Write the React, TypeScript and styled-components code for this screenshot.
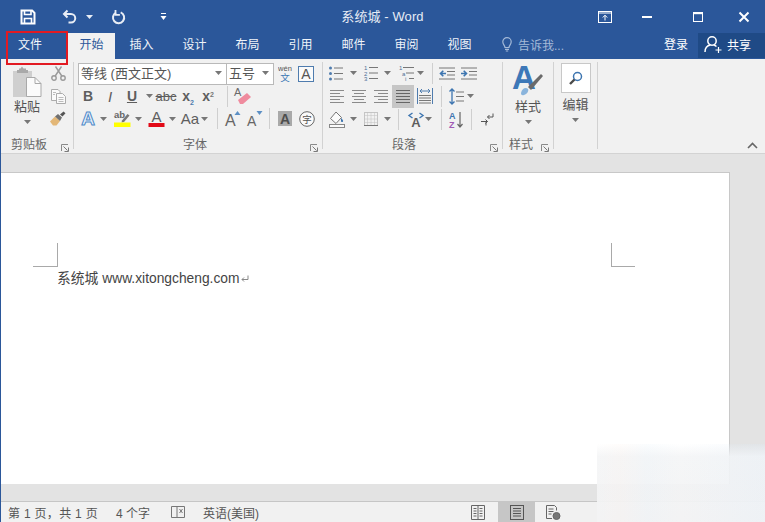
import React from "react";
import styled, { createGlobalStyle } from "styled-components";

const SANS = `"Liberation Sans", "Noto Sans CJK SC", sans-serif`;
const BLUE = "#2b579a";
const INK = "#4a4a4a";

const Global = createGlobalStyle`
  html, body { margin: 0; padding: 0; overflow: hidden; background: #fff; }
  * { box-sizing: border-box; }
`;

const Window = styled.div`
  position: relative;
  width: 765px;
  height: 522px;
  display: flex;
  flex-direction: column;
  overflow: hidden;
  border-left: 1px solid ${BLUE};
  font-family: ${SANS};
  font-size: 12px;
  color: ${INK};
`;

const TitleBar = styled.header`
  height: 33px;
  flex: none;
  margin-left: -1px;
  background: ${BLUE};
  display: grid;
  grid-template-columns: 1fr auto 1fr;
  align-items: center;
  color: #fff;
`;
const TitleText = styled.div`
  font-size: 13px;
  color: #e6ecf5;
  letter-spacing: 0.1px;
  padding-bottom: 2px;
`;
const WinRow = styled.div`
  display: flex;
  align-items: center;
  justify-content: flex-end;
  padding-right: 14px;
  height: 30px;
`;
const Slot = styled.div<{ $w: number; $ml?: number; $h?: number; $end?: boolean }>`
  flex: none;
  width: ${(p) => p.$w}px;
  margin-left: ${(p) => p.$ml ?? 0}px;
  display: flex;
  align-items: ${(p) => (p.$end ? "flex-end" : "center")};
  justify-content: center;
  height: ${(p) => (p.$h ? `${p.$h}px` : "100%")};
`;

const TabBar = styled.nav`
  height: 26px;
  flex: none;
  margin-left: -1px;
  background: ${BLUE};
  display: flex;
  align-items: stretch;
  color: #fff;
`;
const FileTab = styled.div`
  width: 60px;
  display: flex;
  align-items: center;
  justify-content: center;
  padding-bottom: 5px;
  color: #f4f7fb;
`;
const Tab = styled.div<{ $active?: boolean }>`
  width: ${(p) => (p.$active ? 47 : 53)}px;
  margin-left: ${(p) => (p.$active ? 8 : 0)}px;
  display: flex;
  align-items: center;
  justify-content: center;
  padding-bottom: 5px;
  color: ${(p) => (p.$active ? BLUE : "#f0f4f9")};
  background: ${(p) => (p.$active ? "#f1f1f1" : "transparent")};
`;
const TellMe = styled.div`
  margin-left: 16px;
  display: flex;
  align-items: center;
  gap: 6px;
  padding-bottom: 4px;
  color: #a5bad8;
`;
const SignIn = styled.div`
  margin-left: auto;
  width: 32px;
  margin-right: 6px;
  display: flex;
  align-items: center;
  justify-content: center;
  padding-bottom: 5px;
`;
const Share = styled.div`
  width: 67px;
  height: 25px;
  background: #1f4a86;
  display: flex;
  align-items: center;
  padding: 0 0 3px 6px;
  gap: 5px;
`;

const Ribbon = styled.section`
  height: 94px;
  flex: none;
  background: #f1f1f1;
  display: flex;
  position: relative;
`;
const Group = styled.div<{ $w: number }>`
  width: ${(p) => p.$w}px;
  flex: none;
  display: flex;
  flex-direction: column;
`;
const GroupBody = styled.div`
  height: 76px;
  padding-top: 3px;
  display: flex;
  flex: none;
`;
const Stack = styled.div`
  display: flex;
  flex-direction: column;
`;
const ToolRow = styled.div<{ $h: number }>`
  height: ${(p) => p.$h}px;
  display: flex;
  align-items: center;
  flex: none;
`;
const Divider = styled.div`
  width: 1px;
  flex: none;
  margin: 3px 0 4px;
  background: #d2d2d2;
`;
const RowSep = styled.div`
  width: 1px;
  height: 21px;
  background: #cfcfcf;
`;
const GroupLabel = styled.div<{ $pl: number }>`
  flex: 1;
  display: flex;
  align-items: center;
  padding: 0 4px 6px ${(p) => p.$pl}px;
  color: #666;
`;
const Launcher = styled.svg`
  margin-left: auto;
  width: 8px;
  height: 8px;
  margin-top: 8px;
`;
const Combo = styled.div<{ $w: number; $first?: boolean }>`
  width: ${(p) => p.$w}px;
  height: 22px;
  margin-left: ${(p) => (p.$first ? 4 : -1)}px;
  background: #fff;
  border: 1px solid #b9b9b9;
  display: flex;
  align-items: center;
  justify-content: space-between;
  padding: 0 4px 2px 2px;
  font-size: 13px;
  color: #555;
`;
const BigTool = styled.div<{ $w: number; $pl?: number }>`
  width: ${(p) => p.$w}px;
  padding-left: ${(p) => p.$pl ?? 0}px;
  display: flex;
  flex-direction: column;
  align-items: center;
  flex: none;
`;
const BigLabel = styled.div<{ $mt?: number }>`
  font-size: 13px;
  line-height: 16px;
  margin-top: ${(p) => p.$mt ?? 0}px;
  color: #555;
`;
const EditBox = styled.div`
  width: 30px;
  height: 30px;
  background: #fff;
  border: 1px solid #c8c8c8;
  display: flex;
  align-items: center;
  justify-content: center;
  margin-top: 1px;
`;
const ActiveCell = styled.div`
  width: 22px;
  height: 23px;
  background: #c6c6c6;
  display: flex;
  align-items: center;
  justify-content: center;
`;
const Collapse = styled.svg`
  position: absolute;
  right: 7px;
  bottom: 4px;
  width: 11px;
  height: 7px;
`;

const Workspace = styled.main`
  flex: 1;
  background: #e3e3e3;
  border-top: 1px solid #d3d3d3;
  padding: 18px 35px 17px 0;
  display: flex;
  min-height: 0;
`;
const Page = styled.article`
  flex: 1;
  background: #fff;
  border-top: 1px solid #c8c8c8;
  border-right: 1px solid #c8c8c8;
  padding-top: 70px;
`;
const MarkRow = styled.div`
  display: flex;
  justify-content: space-between;
  padding: 0 94px 0 32px;
`;
const MarkLeft = styled.div`
  width: 25px;
  height: 24px;
  border-right: 1px solid #a9a9a9;
  border-bottom: 1px solid #a9a9a9;
`;
const MarkRight = styled.div`
  width: 24px;
  height: 24px;
  border-left: 1px solid #a9a9a9;
  border-bottom: 1px solid #a9a9a9;
`;
const DocLine = styled.p`
  margin: 3px 0 0 56px;
  font-size: 13.8px;
  line-height: 18px;
  color: #444;
  display: flex;
  align-items: center;
  gap: 1px;
  white-space: pre;
`;
const StatusBar = styled.footer`
  height: 21px;
  flex: none;
  background: #f1f1f1;
  border-top: 1px solid #c6c6c6;
  display: flex;
  align-items: stretch;
  color: #555;
  padding-left: 7px;
`;
const StatusText = styled.div<{ $ml?: number; $ls?: number }>`
  margin-left: ${(p) => p.$ml ?? 0}px;
  letter-spacing: ${(p) => p.$ls ?? 0}px;
  display: flex;
  align-items: center;
  white-space: pre;
`;
const StatusIcon = styled.div<{ $ml: number; $w?: number; $on?: boolean }>`
  margin-left: ${(p) => p.$ml}px;
  width: ${(p) => p.$w ?? 16}px;
  flex: none;
  display: flex;
  align-items: center;
  justify-content: center;
  background: ${(p) => (p.$on ? "#c6c6c6" : "transparent")};
`;
const RedFrame = styled.div`
  position: absolute;
  left: 5px;
  top: 31px;
  width: 62px;
  height: 34px;
  border: 2px solid #e21a22;
`;
const Haze = styled.div`
  position: absolute;
  left: 596px;
  top: 444px;
  right: 0;
  bottom: 0;
  background:
    linear-gradient(90deg, transparent 0, rgba(255, 235, 225, 0.12) 14%, rgba(225, 240, 250, 0.16) 30%, transparent 50%, rgba(220, 235, 250, 0.2) 95%),
    linear-gradient(180deg, rgba(244, 245, 246, 0) 0, rgba(244, 245, 246, 0.9) 16%, rgba(243, 243, 244, 0.95) 100%);
`;

/* ---------- icons ---------- */
const Ic = styled.svg`
  display: block;
  flex: none;
  overflow: visible;
`;
const txt = { fontFamily: "Liberation Sans, sans-serif" } as const;

const Caret = ({ light }: { light?: boolean }) => (
  <Ic width="7" height="4" viewBox="0 0 7 4"><path d="M0 0h7L3.500 4z" fill={light ? "#e8edf5" : "#777"} /></Ic>
);
const Lnch = () => (
  <Launcher viewBox="0 0 8 8">
    <path d="M.5 7V.5H7" fill="none" stroke="#8a8a8a" />
    <path d="M2.500 2.500 6.500 6.500M7.500 3.500v4h-4" fill="none" stroke="#7a7a7a" />
  </Launcher>
);
const Save = () => (
  <Ic width="16" height="16" viewBox="0 0 16 16" fill="none" stroke="#fff" strokeWidth="2">
    <path d="M1.500 1.500h10.600l2.400 2.400v10.600h-13z" />
    <path d="M4.500 1.500v4h6.500v-4" strokeWidth="1.600" />
    <path d="M4.500 14v-4.500h7V14" strokeWidth="1.600" />
  </Ic>
);
const Undo = () => (
  <Ic width="16" height="16" viewBox="0 0 16 16" fill="none" stroke="#e8edf5" strokeWidth="2">
    <path d="M5.500 1.500 2 5l3.500 3.500" />
    <path d="M2.500 5h6.500a4 4 0 0 1 0 8.500H6.500" />
  </Ic>
);
const Redo = () => (
  <Ic width="16" height="16" viewBox="0 0 16 16" fill="none" stroke="#e8edf5" strokeWidth="2">
    <path d="M6 3.600A5.600 5.600 0 1 0 10.700 3.400" />
    <path d="M5.500 1v4.800h4.400" strokeWidth="1.800" />
  </Ic>
);
const QatMore = () => (
  <Ic width="7" height="9" viewBox="0 0 7 9"><path d="M1 1.500h5" stroke="#fff" /><path d="M.5 4h6L3.500 8z" fill="#fff" /></Ic>
);
const RibbonMode = () => (
  <Ic width="14" height="12" viewBox="0 0 14 12" fill="none" stroke="#fff">
    <rect x=".5" y=".5" width="13" height="11" />
    <path d="M.5 2h13" />
    <path d="M7 9.500V4.500M4.800 6.500 7 4.200l2.200 2.300" />
  </Ic>
);
const Minimize = () => (
  <Ic width="10" height="2" viewBox="0 0 10 2"><rect width="10" height="2" fill="#fff" /></Ic>
);
const Maximize = () => (
  <Ic width="10" height="10" viewBox="0 0 10 10" fill="none" stroke="#fff"><rect x=".5" y=".5" width="9" height="9" /><path d="M0 1.500h10" strokeWidth="1.400" /></Ic>
);
const CloseX = () => (
  <Ic width="10" height="10" viewBox="0 0 10 10" stroke="#fff" strokeWidth="2"><path d="M.5.500l9 9M9.500.500l-9 9" /></Ic>
);
const Bulb = () => (
  <Ic width="10" height="15" viewBox="0 0 10 15" fill="none" stroke="#a5bad8" strokeWidth="1.200">
    <path d="M3 10.500C3 8.500.8 7.500.8 4.800a4.200 4.200 0 0 1 8.400 0C9.200 7.500 7 8.500 7 10.500z" />
    <path d="M3 12.300h4M3.800 14h2.400" />
  </Ic>
);
const Person = () => (
  <Ic width="18" height="18" viewBox="0 0 18 18" fill="none" stroke="#fff" strokeWidth="1.500">
    <circle cx="8" cy="6" r="4.200" />
    <path d="M1 17c0-4 2.500-6.500 5.500-7M9.500 10c1.200.2 2.200.8 3 1.500" />
    <path d="M11.500 15h6M14.500 12v6" strokeWidth="1.200" />
  </Ic>
);
const Paste = () => (
  <Ic width="30" height="31" viewBox="0 0 30 31">
    <path d="M1 5h19v26H1z" fill="#cfcfcf" />
    <path d="M7 4V2.500h1.500L10 .5l1.500 2H14V4h2v3H5V4z" fill="#a9a9a9" />
    <path d="M14.500 11.500h8.500l6 6v13h-14.500z" fill="#fbfbfb" stroke="#a9a9a9" />
    <path d="M23 11.500v6h6" fill="none" stroke="#a9a9a9" />
  </Ic>
);
const Scissors = () => (
  <Ic width="15" height="15" viewBox="0 0 15 15" fill="none" stroke="#9a9a9a" strokeWidth="1.400">
    <circle cx="3" cy="12" r="2.200" />
    <circle cx="12" cy="12" r="2.200" />
    <path d="M4.200 10 10.500.5M10.800 10 4.500.5" />
  </Ic>
);
const CopyDocs = () => (
  <Ic width="15" height="15" viewBox="0 0 15 15" fill="#fafafa" stroke="#acacac">
    <path d="M.5.500h6.500l2 2v9H.5z" />
    <path d="M5.500 4.500h6l3 3v7h-9z" />
    <path d="M7.500 8.500h5M7.500 10.500h5M7.500 12.500h5M2 3.500h3M2 5.500h2" strokeWidth=".8" />
  </Ic>
);
const FormatBrush = () => (
  <Ic width="16" height="15" viewBox="0 0 16 15">
    <path d="M0 10.500 5 5.500l5 4.500-3.500 4.500H3z" fill="#e3b777" />
    <path d="M5 5.500l3-2.500 4 3.500-2 3.500z" fill="#6f6f6f" />
    <path d="M10 3.500l3.500-3 2 1.800-3 3.200z" fill="#555" />
  </Ic>
);
const WenGlyph = styled.span`
  font-size: 7.5px;
  line-height: 9px;
  height: 8px;
  overflow: hidden;
  color: #555;
`;
const WenChar = styled.span`
  font-size: 9.5px;
  line-height: 10px;
  height: 10px;
  overflow: hidden;
  color: #3b78b5;
`;
const WenStack = styled.div`
  display: flex;
  flex-direction: column;
  align-items: center;
  gap: 1px;
`;
const BoxA = () => (
  <Ic width="16" height="16" viewBox="0 0 16 16">
    <rect x=".5" y=".5" width="15" height="15" fill="#fafafa" stroke="#4f7cae" />
    <text x="8" y="13" textAnchor="middle" fontSize="14" fill="#555" style={txt}>A</text>
  </Ic>
);
const Glyph = styled.span<{ $size?: number; $bold?: boolean; $italic?: boolean; $under?: boolean; $strike?: boolean }>`
  font-size: ${(p) => p.$size ?? 14}px;
  font-weight: ${(p) => (p.$bold ? 700 : 400)};
  font-style: ${(p) => (p.$italic ? "italic" : "normal")};
  text-decoration: ${(p) => (p.$under ? "underline" : p.$strike ? "line-through" : "none")};
  color: #5e5e5e;
  line-height: 1;
  white-space: nowrap;
`;
const Sup = styled.span<{ $low?: boolean }>`
  font-size: 7px;
  font-weight: 700;
  color: ${(p) => (p.$low ? "#4f7cae" : "#777")};
  position: relative;
  top: ${(p) => (p.$low ? 4 : -4)}px;
`;
const EffectA = styled.span`
  font-size: 19px;
  font-weight: 700;
  line-height: 1;
  color: #eaf2fb;
  -webkit-text-stroke: 1px #4f8ac9;
`;
const Highlight = () => (
  <Ic width="17" height="17" viewBox="0 0 17 17">
    <text x="0" y="8" fontSize="9.500" fontWeight="700" fill="#666" style={txt}>ab</text>
    <path d="M8 10.500 13.500 4l2 1.500-5.500 6.500-2.500.5z" fill="#777" />
    <rect x="0" y="12.500" width="16.500" height="4.500" fill="#ffff00" />
  </Ic>
);
const FontColor = () => (
  <Ic width="17" height="17" viewBox="0 0 17 17">
    <text x="8.500" y="12" textAnchor="middle" fontSize="15" fill="#5e5e5e" style={txt}>A</text>
    <rect x=".5" y="13" width="16" height="4" fill="#e20a17" />
  </Ic>
);
const Eraser = () => (
  <Ic width="18" height="18" viewBox="0 0 18 18">
    <text x="0" y="9" fontSize="11" fill="#6a6a6a" style={txt}>A</text>
    <path d="M4 13 13 6l4 4-8 7H6z" fill="#ef8b9e" />
  </Ic>
);
const SizeA = ({ up }: { up: boolean }) => (
  <Ic width="17" height="17" viewBox="0 0 17 17">
    <text x="0" y="16" fontSize={up ? 16 : 14} fill="#666" style={txt}>A</text>
    <path d={up ? "M9.500 5 12.500 1l3 4z" : "M9.500 1h6l-3 4z"} fill="#5c8fc4" />
  </Ic>
);
const ShadeA = () => (
  <Ic width="14" height="15" viewBox="0 0 14 15">
    <rect width="14" height="15" fill="#a9a9a9" />
    <text x="7" y="13" textAnchor="middle" fontSize="14" fontWeight="700" fill="#4e4e4e" style={txt}>A</text>
  </Ic>
);
const Phonetic = () => (
  <Ic width="16" height="16" viewBox="0 0 16 16">
    <circle cx="8" cy="8" r="7.300" fill="#fafafa" stroke="#666" />
    <text x="8" y="11.500" textAnchor="middle" fontSize="9.500" fill="#555" fontFamily="Noto Sans CJK SC">字</text>
  </Ic>
);
const LINE = "#777";
const Bullets = () => (
  <Ic width="14" height="15" viewBox="0 0 14 15">
    <path d="M5 2h9M5 7.500h9M5 13h9" stroke={LINE} />
    <circle cx="1.500" cy="2" r="1.500" fill="#4f7cae" /><circle cx="1.500" cy="7.500" r="1.500" fill="#4f7cae" /><circle cx="1.500" cy="13" r="1.500" fill="#4f7cae" />
  </Ic>
);
const Numbers = () => (
  <Ic width="14" height="16" viewBox="0 0 14 16">
    <path d="M5 2.500h9M5 8h9M5 13.500h9" stroke={LINE} />
    <g fontSize="6" fill="#4f6f96" style={txt}>
      <text x="0" y="5">1</text><text x="0" y="10.500">2</text><text x="0" y="16">3</text>
    </g>
  </Ic>
);
const Multi = () => (
  <Ic width="15" height="16" viewBox="0 0 15 16">
    <path d="M4 2.500h11M7 8h8M10 13.500h5" stroke={LINE} />
    <g fontSize="6" fill="#4f6f96" style={txt}>
      <text x="0" y="5">1</text><text x="3" y="10.500">a</text><text x="6" y="16">i</text>
    </g>
  </Ic>
);
const Indent = ({ dir }: { dir: "l" | "r" }) => (
  <Ic width="16" height="13" viewBox="0 0 16 13">
    <path d="M0 1h16M8 4.500h8M8 8h8M0 12h16" stroke={LINE} />
    <path d={dir === "l" ? "M7 6.500H1.500M4.300 3.700 1.500 6.500l2.800 2.800" : "M0 6.500h5.500M2.700 3.700l2.800 2.800-2.800 2.800"} fill="none" stroke="#3d75b0" strokeWidth="1.600" />
  </Ic>
);
const Align = ({ kind }: { kind: "l" | "c" | "r" | "j" }) => {
  const rows = [1, 4, 7, 10, 13];
  const w = [14, 10, 14, 10, 14];
  const x = (i: number) => (kind === "j" || kind === "l" ? 0 : kind === "r" ? 14 - w[i] : (14 - w[i]) / 2);
  return (
    <Ic width="14" height="14" viewBox="0 0 14 14">
      {rows.map((y, i) => (
        <path key={y} d={`M${x(i)} ${y + 0.5}h${kind === "j" ? 14 : w[i]}`} stroke={kind === "j" ? "#666" : "#8a8a8a"} />
      ))}
    </Ic>
  );
};
const Distribute = () => (
  <Ic width="16" height="16" viewBox="0 0 16 16">
    <path d="M.5 0v16M15.500 0v16" stroke="#4f7cae" />
    <path d="M3 3h10M5 1 3 3l2 2M11 1l2 2-2 2" fill="none" stroke="#4f7cae" />
    <path d="M2 7.500h12M2 10h12M2 12.500h12M2 15h12" stroke={LINE} />
  </Ic>
);
const Spacing = () => (
  <Ic width="15" height="17" viewBox="0 0 15 17">
    <path d="M3 1v15M.5 3.500 3 1l2.500 2.500M.5 13.500 3 16l2.500-2.500" fill="none" stroke="#3d75b0" strokeWidth="1.300" />
    <path d="M7 4h8M7 8.500h8M7 13h8" stroke={LINE} />
  </Ic>
);
const Shading = () => (
  <Ic width="17" height="17" viewBox="0 0 17 17">
    <path d="M7 1 1.500 7.500 7 12.500l5.500-6z" fill="#fbfbfb" stroke="#777" />
    <path d="M12 7c1.500 1.500 2.500 2.500 2 3.500s-2.500.5-2-1z" fill="#3d75b0" />
    <rect x=".5" y="13.500" width="15" height="3" fill="#fafafa" stroke="#888" />
  </Ic>
);
const Borders = () => (
  <Ic width="14" height="14" viewBox="0 0 14 14" fill="none">
    <rect x=".5" y=".5" width="13" height="13" stroke="#999" strokeDasharray="1 1" />
    <path d="M7 .5v13M.5 7h13M3.500.5v13M10.500.5v13M.5 3.500h13M.5 10.500h13" stroke="#c0c0c0" strokeDasharray="1 1" />
    <path d="M0 13.500h14" stroke="#777" />
  </Ic>
);
const ChineseLayout = () => (
  <Ic width="16" height="15" viewBox="0 0 16 15">
    <path d="M4.500 1 1 3.500 4.500 6M11.500 1 15 3.500 11.500 6" fill="none" stroke="#3d75b0" strokeWidth="1.400" />
    <text x="8" y="15" textAnchor="middle" fontSize="13" fontWeight="700" fill="#5e5e5e" style={txt}>A</text>
  </Ic>
);
const Sort = () => (
  <Ic width="14" height="17" viewBox="0 0 14 17">
    <text x="0" y="8" fontSize="9" fontWeight="700" fill="#3d75b0" style={txt}>A</text>
    <text x="0" y="17" fontSize="9" fontWeight="700" fill="#a05bb5" style={txt}>Z</text>
    <path d="M11 1v15M8.500 13 11 16l2.500-3" fill="none" stroke="#666" strokeWidth="1.200" />
  </Ic>
);
const ParaMark = () => (
  <Ic width="13" height="13" viewBox="0 0 13 13" fill="none" stroke="#555">
    <path d="M12 .5V4H6.500M8.500 2 6.500 4l2 2" />
    <path d="M0 8.500h6.500M4.500 6.500l2 2-2 2M5 8.500v4" />
  </Ic>
);
const StylesIcon = () => (
  <Ic width="30" height="32" viewBox="0 0 30 32">
    <text x="-1" y="24" fontSize="33" fontWeight="700" fill="#3d78b8" style={txt}>A</text>
    <path d="M8 28c1-5 5-6 7-4 1 2-1 5-4 6-2 .6-3 0-3-2z" fill="#8ab4dc" />
    <path d="M15 22 28 9l2 2-12 14z" fill="#6a6a6a" />
  </Ic>
);
const Magnifier = () => (
  <Ic width="14" height="14" viewBox="0 0 14 14" fill="none" stroke="#3d75b0">
    <circle cx="8.500" cy="5.500" r="4" strokeWidth="1.500" />
    <path d="M5.500 8.500 1 13" strokeWidth="2.400" stroke="#4a4a4a" />
  </Ic>
);
const Return = () => (
  <Ic width="8" height="8" viewBox="0 0 8 8" fill="none" stroke="#888"><path d="M7 .5V4.500H1M3 2.500 1 4.500l2 2" /></Ic>
);
const Proof = () => (
  <Ic width="14" height="15" viewBox="0 0 14 15" fill="none" stroke="#777">
    <path d="M.5 1.500h5.500v11H.5zM6 1.500h7.500v11H6" />
    <path d="M8.500 4l3 4M11.500 4l-3 4" />
  </Ic>
);
const ReadView = () => (
  <Ic width="14" height="15" viewBox="0 0 14 15" fill="none" stroke="#666">
    <path d="M.5.500h13v14H.5zM7 .500v14" />
    <path d="M2.500 3.500h3M2.500 6h3M2.500 8.500h3M2.500 11h3M8.500 3.500h3M8.500 6h3M8.500 8.500h3M8.500 11h3" />
  </Ic>
);
const PrintView = () => (
  <Ic width="14" height="15" viewBox="0 0 14 15" fill="none" stroke="#555">
    <rect x=".5" y=".5" width="13" height="14" />
    <path d="M3 3.500h8M3 6h8M3 8.500h8M3 11h8" />
  </Ic>
);
const WebView = () => (
  <Ic width="15" height="15" viewBox="0 0 15 15" fill="none" stroke="#666">
    <path d="M6 13.500H.5v-13h8l2 2v3" />
    <path d="M2.500 4h5M2.500 6.500h5M2.500 9h3" />
    <circle cx="10.500" cy="11" r="3.500" fill="#777" />
  </Ic>
);

/* ---------- data ---------- */
type Tool = [number, number, React.ReactNode];
const Tools = ({ h, start, items }: { h: number; start: number; items: Tool[] }) => {
  let edge = start;
  return (
    <ToolRow $h={h}>
      {items.map(([center, w, node], i) => {
        const left = center - w / 2;
        const ml = left - edge;
        edge = left + w;
        return (
          <Slot key={i} $w={w} $ml={ml}>
            {node}
          </Slot>
        );
      })}
    </ToolRow>
  );
};

const quickLeft: Tool[] = [
  [28, 20, <Save />],
  [70, 20, <Undo />],
  [89, 10, <Caret light />],
  [118, 20, <Redo />],
  [163, 12, <QatMore />],
];
const winRight: Tool[] = [
  [605, 20, <RibbonMode />],
  [647, 14, <Minimize />],
  [698, 14, <Maximize />],
  [744, 14, <CloseX />],
];

const fontRow1: Tool[] = [
  [286, 20, <WenStack><WenGlyph>wén</WenGlyph><WenChar>文</WenChar></WenStack>],
  [307, 18, <BoxA />],
];
const fontRow2: Tool[] = [
  [88, 16, <Glyph $bold>B</Glyph>],
  [110, 14, <Glyph $italic $size={15}>I</Glyph>],
  [132, 16, <Glyph $bold $under>U</Glyph>],
  [149, 9, <Caret />],
  [166, 22, <Glyph $strike $size={13}>abc</Glyph>],
  [188, 16, <Glyph $bold>x<Sup $low>2</Sup></Glyph>],
  [208, 16, <Glyph $bold>x<Sup>2</Sup></Glyph>],
  [227.5, 1, <RowSep />],
  [243, 20, <Eraser />],
];
const fontRow3: Tool[] = [
  [88, 18, <EffectA>A</EffectA>],
  [103, 9, <Caret />],
  [122, 18, <Highlight />],
  [138, 9, <Caret />],
  [156, 18, <FontColor />],
  [172, 9, <Caret />],
  [190, 20, <Glyph $size={15}>Aa</Glyph>],
  [204, 8, <Caret />],
  [217, 1, <RowSep />],
  [233, 18, <SizeA up />],
  [255, 18, <SizeA up={false} />],
  [269, 1, <RowSep />],
  [285, 16, <ShadeA />],
  [307, 18, <Phonetic />],
];
const paraRow1: Tool[] = [
  [337, 16, <Bullets />],
  [354, 9, <Caret />],
  [372, 16, <Numbers />],
  [388, 9, <Caret />],
  [407, 16, <Multi />],
  [421, 9, <Caret />],
  [433.5, 1, <RowSep />],
  [448, 18, <Indent dir="l" />],
  [470, 18, <Indent dir="r" />],
];
const paraRow2: Tool[] = [
  [338, 16, <Align kind="l" />],
  [360, 16, <Align kind="c" />],
  [382, 16, <Align kind="r" />],
  [404, 22, <ActiveCell><Align kind="j" /></ActiveCell>],
  [426, 18, <Distribute />],
  [442, 1, <RowSep />],
  [457, 17, <Spacing />],
  [471, 9, <Caret />],
];
const paraRow3: Tool[] = [
  [338, 18, <Shading />],
  [354, 9, <Caret />],
  [372, 16, <Borders />],
  [388, 9, <Caret />],
  [399.5, 1, <RowSep />],
  [417, 18, <ChineseLayout />],
  [429, 8, <Caret />],
  [442, 1, <RowSep />],
  [457, 16, <Sort />],
  [472, 1, <RowSep />],
  [488, 16, <ParaMark />],
];
const tabs = ["插入", "设计", "布局", "引用", "邮件", "审阅", "视图"];

export default function App() {
  return (
    <>
      <Global />
      <Window>
        <TitleBar>
          <Tools h={30} start={0} items={quickLeft} />
          <TitleText>系统城 - Word</TitleText>
          <WinRow>
            <Tools h={30} start={560} items={winRight} />
          </WinRow>
        </TitleBar>
        <TabBar>
          <FileTab>文件</FileTab>
          <Tab $active>开始</Tab>
          {tabs.map((t) => (
            <Tab key={t}>{t}</Tab>
          ))}
          <TellMe>
            <Bulb />
            告诉我...
          </TellMe>
          <SignIn>登录</SignIn>
          <Share>
            <Person />
            共享
          </Share>
        </TabBar>
        <Ribbon>
          <Group $w={72}>
            <GroupBody>
              <BigTool $w={49} $pl={3}>
                <Slot $w={30} $h={35} $end><Paste /></Slot>
                <BigLabel $mt={2}>粘贴</BigLabel>
                <Slot $w={10} $h={13}><Caret /></Slot>
              </BigTool>
              <Stack>
                <Tools h={23} start={50} items={[[58, 16, <Scissors />]]} />
                <Tools h={22} start={50} items={[[58, 16, <CopyDocs />]]} />
                <Tools h={23} start={50} items={[[58, 16, <FormatBrush />]]} />
              </Stack>
            </GroupBody>
            <GroupLabel $pl={10}>
              剪贴板
              <Lnch />
            </GroupLabel>
          </Group>
          <Divider />
          <Group $w={248}>
            <GroupBody>
              <Stack>
                <ToolRow $h={23}>
                  <Combo $w={149} $first>
                    等线 (西文正文)
                    <Caret />
                  </Combo>
                  <Combo $w={48}>
                    五号
                    <Caret />
                  </Combo>
                  <Tools h={23} start={275} items={fontRow1} />
                </ToolRow>
                <Tools h={22} start={74} items={fontRow2} />
                <Tools h={23} start={74} items={fontRow3} />
              </Stack>
            </GroupBody>
            <GroupLabel $pl={109}>
              字体
              <Lnch />
            </GroupLabel>
          </Group>
          <Divider />
          <Group $w={179}>
            <GroupBody>
              <Stack>
                <Tools h={22} start={324} items={paraRow1} />
                <Tools h={24} start={324} items={paraRow2} />
                <Tools h={22} start={324} items={paraRow3} />
              </Stack>
            </GroupBody>
            <GroupLabel $pl={69}>
              段落
              <Lnch />
            </GroupLabel>
          </Group>
          <Divider />
          <Group $w={50}>
            <GroupBody>
              <BigTool $w={50}>
                <Slot $w={32} $h={37}><StylesIcon /></Slot>
                <BigLabel>样式</BigLabel>
                <Slot $w={10} $h={14}><Caret /></Slot>
              </BigTool>
            </GroupBody>
            <GroupLabel $pl={6}>
              样式
              <Lnch />
            </GroupLabel>
          </Group>
          <Divider />
          <Group $w={43}>
            <GroupBody>
              <BigTool $w={43}>
                <EditBox><Magnifier /></EditBox>
                <BigLabel $mt={4}>编辑</BigLabel>
                <Slot $w={10} $h={14}><Caret /></Slot>
              </BigTool>
            </GroupBody>
          </Group>
          <Divider />
          <Collapse viewBox="0 0 11 7"><path d="M1 6l4.500-4.500L10 6" fill="none" stroke="#666" strokeWidth="1.600" /></Collapse>
        </Ribbon>
        <Workspace>
          <Page>
            <MarkRow>
              <MarkLeft />
              <MarkRight />
            </MarkRow>
            <DocLine>
              系统城 www.xitongcheng.com
              <Return />
            </DocLine>
          </Page>
        </Workspace>
        <StatusBar>
          <StatusText $ls={0.3}>第 1 页，共 1 页</StatusText>
          <StatusText $ml={18}>4 个字</StatusText>
          <StatusIcon $ml={20} $w={16}><Proof /></StatusIcon>
          <StatusText $ml={17}>英语(美国)</StatusText>
          <StatusIcon $ml={211} $w={16}><ReadView /></StatusIcon>
          <StatusIcon $ml={12} $w={37} $on><PrintView /></StatusIcon>
          <StatusIcon $ml={10} $w={16}><WebView /></StatusIcon>
        </StatusBar>
        <RedFrame />
        <Haze />
      </Window>
    </>
  );
}
